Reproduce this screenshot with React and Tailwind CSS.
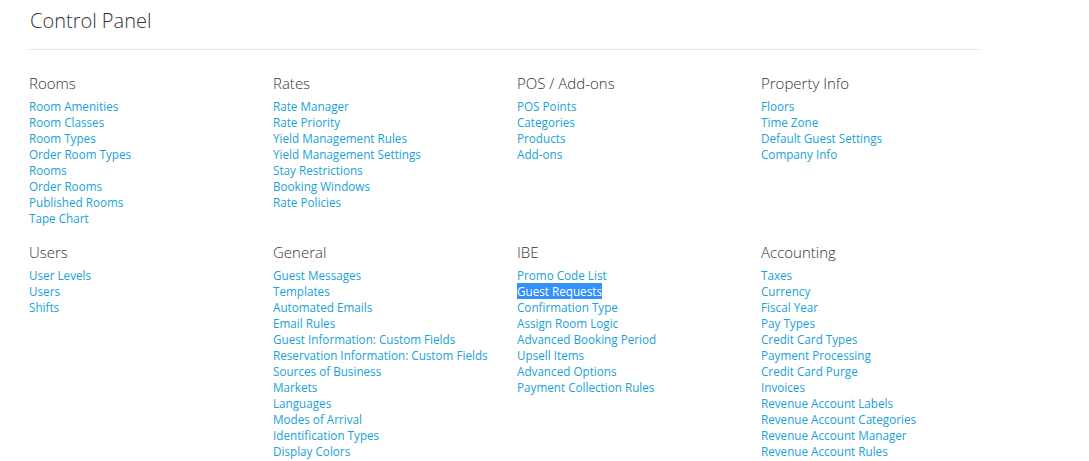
import React from 'react';

const sections = [
    {
        title: 'Rooms',
        links: ['Room Amenities', 'Room Classes', 'Room Types', 'Order Room Types', 'Rooms', 'Order Rooms', 'Published Rooms', 'Tape Chart'],
    },
    {
        title: 'Rates',
        links: ['Rate Manager', 'Rate Priority', 'Yield Management Rules', 'Yield Management Settings', 'Stay Restrictions', 'Booking Windows', 'Rate Policies'],
    },
    {
        title: 'POS / Add-ons',
        links: ['POS Points', 'Categories', 'Products', 'Add-ons'],
    },
    {
        title: 'Property Info',
        links: ['Floors', 'Time Zone', 'Default Guest Settings', 'Company Info'],
    },
    {
        title: 'Users',
        links: ['User Levels', 'Users', 'Shifts'],
    },
    {
        title: 'General',
        links: [
            'Guest Messages', 'Templates', 'Automated Emails', 'Email Rules', 'Guest Information: Custom Fields',
            'Reservation Information: Custom Fields', 'Sources of Business', 'Markets', 'Languages', 'Modes of Arrival',
            'Identification Types', 'Display Colors',
        ],
    },
    {
        title: 'IBE',
        links: ['Promo Code List', 'Guest Requests', 'Confirmation Type', 'Assign Room Logic', 'Advanced Booking Period', 'Upsell Items', 'Advanced Options', 'Payment Collection Rules'],
    },
    {
        title: 'Accounting',
        links: [
            'Taxes', 'Currency', 'Fiscal Year', 'Pay Types', 'Credit Card Types', 'Payment Processing', 'Credit Card Purge',
            'Invoices', 'Revenue Account Labels', 'Revenue Account Categories', 'Revenue Account Manager', 'Revenue Account Rules',
        ],
    },
];

const Section = ({ section }) => (
    <div>
        <h3 className="text-[15px] leading-[20px] font-light text-[#333] mb-[5px]">{section.title}</h3>
        <ul>
            {section.links.map((link) => (
                <li key={link} className="text-[11.7px] leading-[16px]">
                    {link === 'Guest Requests' ? (
                        <a href="#" className="bg-[#3390ff] text-white">{link}</a>
                    ) : (
                        <a href="#" className="text-[#1ba1d6]">{link}</a>
                    )}
                </li>
            ))}
        </ul>
    </div>
);

const App = () => {
    return (
        <div className="min-h-[461px] bg-white pl-[29px] pt-[7px] overflow-hidden" style={{ fontFamily: '"Open Sans", sans-serif' }}>
            <div className="w-[950px] border-b border-[#e5e5e5] pb-[14px]">
                <h1 className="text-[20px] leading-[28px] font-light text-[#333] pl-px">Control Panel</h1>
            </div>
            <div className="grid grid-cols-[244px_244px_244px_244px] gap-y-[16px] mt-[23px]">
                {sections.map((section) => (
                    <Section key={section.title} section={section} />
                ))}
            </div>
        </div>
    );
};

export default App;
